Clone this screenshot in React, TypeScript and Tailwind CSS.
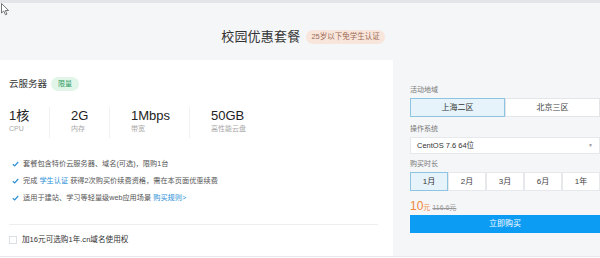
import { useState } from 'react';

const specs = [
    { value: '1核', label: 'CPU' },
    { value: '2G', label: '内存' },
    { value: '1Mbps', label: '带宽' },
    { value: '50GB', label: '高性能云盘' },
];

const durations = ['1月', '2月', '3月', '6月', '1年'];

function Check() {
    return (
        <svg width="7" height="6" viewBox="0 0 7 6" className="mr-[4px] shrink-0">
            <path d="M0.8 3.2 L2.7 4.9 L6.2 1" fill="none" stroke="#2b8fd8" strokeWidth="1.2" />
        </svg>
    );
}

export default function App() {
    const [region, setRegion] = useState(0);
    const [duration, setDuration] = useState(0);

    return (
        <div
            className="relative w-[600px] h-[258px] overflow-hidden bg-white text-[#333]"
            style={{ fontFamily: '"Liberation Sans", "Noto Sans CJK SC", sans-serif' }}
        >
            {/* mouse pointer from the capture */}
            <svg className="absolute left-[1px] top-[3px]" width="9" height="13" viewBox="0 0 9 13">
                <path d="M0.5 0.5 L0.5 10 L2.8 8 L4.5 11.8 L6 11.1 L4.4 7.5 L7.6 7.5 Z" fill="#fff" stroke="#555" strokeWidth="0.8" />
            </svg>

            {/* header */}
            <div className="h-[60px] border-t-[3px] border-[#e3e5e8] bg-[#f5f6f8] flex items-center justify-center gap-[6px] pl-[6px] pt-[11px]">
                <h1 className="text-[13px] text-[#333] tracking-[0.2px]">校园优惠套餐</h1>
                <span className="h-[14px] px-[5px] rounded-full bg-[#f8e6dc] text-[#9b6a55] text-[7.5px] flex items-center">
                    25岁以下免学生认证
                </span>
            </div>

            <div className="flex h-[197px] border-b border-[#e6e8eb]">
                {/* left card */}
                <div className="w-[393px] bg-white flex flex-col pl-[9px] pt-[17px]">
                    <div className="flex items-center gap-[4px] h-[14px]">
                        <span className="text-[9.5px] text-[#333]">云服务器</span>
                        <span className="h-[14px] px-[7px] rounded-full bg-[#e2f5e9] text-[#2e9d5e] text-[7px] flex items-center">
                            限量
                        </span>
                    </div>

                    <div className="flex mt-[16px] h-[31px]">
                        {specs.map((s, i) => (
                            <div
                                key={s.label}
                                className={
                                    i === 0
                                        ? 'w-[41px] border-r border-[#f0f1f3] flex flex-col'
                                        : i === 1
                                          ? 'w-[60px] pl-[21px] border-r border-[#f0f1f3] flex flex-col'
                                          : i === 2
                                            ? 'w-[80px] pl-[21px] border-r border-[#f0f1f3] flex flex-col'
                                            : 'pl-[21px] flex flex-col'
                                }
                            >
                                <span className="text-[13px] leading-[17px] text-[#222]">{s.value}</span>
                                <span className="text-[7px] leading-[10px] text-[#aaa]">{s.label}</span>
                            </div>
                        ))}
                    </div>

                    <ul className="mt-[21px] flex flex-col gap-[8px] text-[7.2px] leading-[9px] text-[#555]">
                        <li className="flex items-center pl-[3px]">
                            <Check />
                            套餐包含特价云服务器、域名(可选)，限购1台
                        </li>
                        <li className="flex items-center pl-[3px]">
                            <Check />
                            完成&nbsp;<span className="text-[#2b8fd8]">学生认证</span>&nbsp;获得2次购买价续费资格，需在本页面优惠续费
                        </li>
                        <li className="flex items-center pl-[3px]">
                            <Check />
                            适用于建站、学习等轻量级web应用场景&nbsp;<span className="text-[#2b8fd8]">购买规则&gt;</span>
                        </li>
                    </ul>

                    <div className="mt-[22px] w-[369px] border-t border-[#eceef0]" />

                    <label className="mt-[9px] flex items-center gap-[5px] text-[7.6px] text-[#333]">
                        <span className="w-[8px] h-[8px] border border-[#dcdfe3] bg-white" />
                        加16元可选购1年.cn域名使用权
                    </label>
                </div>

                {/* right panel */}
                <div className="flex-1 bg-[#f5f6f8] pl-[17px] pt-[25px]">
                    <div className="w-[190px] flex flex-col">
                        <span className="text-[7px] leading-[10px] text-[#777]">活动地域</span>
                        <div className="mt-[3px] flex h-[19px] text-[8px]">
                            {['上海二区', '北京三区'].map((r, i) => (
                                <button
                                    key={r}
                                    onClick={() => setRegion(i)}
                                    className={
                                        region === i
                                            ? 'flex-1 bg-[#e6f3fa] border border-[#8cc4e2] text-[#333]'
                                            : 'flex-1 bg-white border border-[#e3e5e8] text-[#444]'
                                    }
                                >
                                    {r}
                                </button>
                            ))}
                        </div>

                        <span className="mt-[7px] text-[7px] leading-[10px] text-[#777]">操作系统</span>
                        <div className="mt-[3px] h-[17px] bg-white border border-[#e6e8eb] flex items-center justify-between px-[6px] text-[7.5px] text-[#333]">
                            <span>CentOS 7.6 64位</span>
                            <span className="text-[5px] text-[#999]">▼</span>
                        </div>

                        <span className="mt-[5px] text-[7px] leading-[10px] text-[#777]">购买时长</span>
                        <div className="mt-[3px] flex h-[19px] text-[8px]">
                            {durations.map((d, i) => (
                                <button
                                    key={d}
                                    onClick={() => setDuration(i)}
                                    className={
                                        duration === i
                                            ? 'w-[38px] bg-[#e6f3fa] border border-[#8cc4e2] text-[#333]'
                                            : 'w-[38px] bg-white border border-[#e6e8eb] text-[#444]'
                                    }
                                >
                                    {d}
                                </button>
                            ))}
                        </div>

                        <div className="mt-[6px] flex items-baseline h-[14px]">
                            <span className="text-[12px] text-[#f0873a]">10</span>
                            <span className="text-[7px] text-[#f0873a] mr-[2px]">元</span>
                            <span className="text-[7px] text-[#999] line-through">116.6元</span>
                        </div>

                        <button className="mt-[4px] h-[18px] bg-[#0d9cf3] text-white text-[8px]">立即购买</button>
                    </div>
                </div>
            </div>
        </div>
    );
}
